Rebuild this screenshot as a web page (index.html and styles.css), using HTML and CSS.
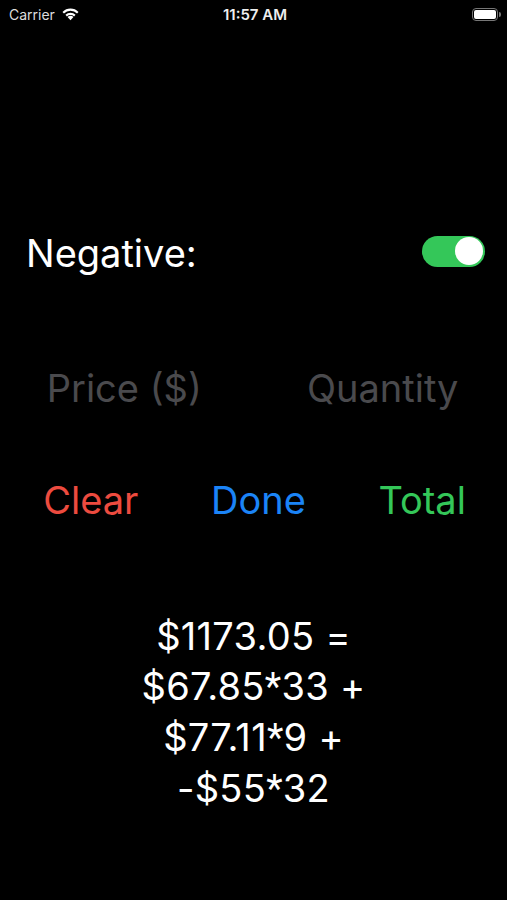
FILE: index.html
```html
<!DOCTYPE html>
<html lang="en">
<head>
  <meta charset="UTF-8" />
  <meta name="viewport" content="width=device-width, initial-scale=1.0"/>
  <title>Price Calculator</title>
  <link rel="stylesheet" href="styles.css">
</head>
<body>
  <div class="status-bar">
    <div class="carrier">
      Carrier
      <svg class="wifi" width="19" height="14" viewBox="0 0 18 13">
        <path d="M9 12.5 L6.2 9.4 A4.2 4.2 0 0 1 11.8 9.4 Z" fill="#fff"/>
        <path d="M4.2 7.3 A6.9 6.9 0 0 1 13.8 7.3 L12.4 8.8 A4.9 4.9 0 0 0 5.6 8.8 Z" fill="#fff"/>
        <path d="M1.4 4.5 A10.7 10.7 0 0 1 16.6 4.5 L15.2 6 A8.7 8.7 0 0 0 2.8 6 Z" fill="#fff"/>
      </svg>
    </div>
    <div class="time">11:57 AM</div>
    <div class="battery">
      <span class="battery-body"><span class="battery-level"></span></span>
      <span class="battery-nub"></span>
    </div>
  </div>

  <div class="toggle-row">
    <span class="label">Negative:</span>
    <span class="switch on"><span class="knob"></span></span>
  </div>

  <div class="fields">
    <input type="text" class="field" placeholder="Price ($)">
    <input type="text" class="field" placeholder="Quantity">
  </div>

  <div class="buttons">
    <button class="btn clear">Clear</button>
    <button class="btn done">Done</button>
    <button class="btn total">Total</button>
  </div>

  <div class="result">
    $1173.05 =<br>
    $67.85<span class="op">*</span>33 +<br>
    $77.11<span class="op">*</span>9 +<br>
    -$55<span class="op">*</span>32
  </div>
</body>
</html>
```

FILE: styles.css
```css
body {
  font-family: Inter, "Noto Sans", sans-serif;
  margin: 0;
  padding: 0;
  background-color: #000;
  color: #fff;
  width: 507px;
}

.status-bar {
  display: flex;
  justify-content: space-between;
  align-items: center;
  height: 28px;
  padding: 0 6px 0 9px;
  font-size: 14px;
}

.carrier {
  flex: 1;
  display: flex;
  align-items: center;
  gap: 6px;
  color: #ddd;
}

.time {
  font-weight: 600;
  font-size: 15px;
  color: #eee;
}

.battery {
  flex: 1;
  display: flex;
  justify-content: flex-end;
  align-items: center;
}

.battery-body {
  display: flex;
  width: 26px;
  height: 13px;
  box-sizing: border-box;
  border: 1px solid #777;
  border-radius: 4px;
  padding: 1px;
}

.battery-level {
  flex: 1;
  background-color: #fff;
  border-radius: 2px;
}

.battery-nub {
  width: 2px;
  height: 5px;
  margin-left: 1px;
  background-color: #777;
  border-radius: 0 2px 2px 0;
}

.toggle-row {
  display: flex;
  justify-content: space-between;
  align-items: center;
  margin-top: 201px;
  padding: 0 22px 0 26px;
  height: 44px;
}

.label {
  font-size: 38px;
  padding-top: 4px;
}

.switch {
  display: flex;
  align-items: center;
  justify-content: flex-end;
  width: 63px;
  height: 31px;
  box-sizing: border-box;
  padding: 2px;
  border-radius: 16px;
  background-color: #34c759;
}

.switch .knob {
  width: 28px;
  height: 28px;
  border-radius: 50%;
  background-color: #fff;
}

.fields {
  display: grid;
  grid-template-columns: 1fr 1fr;
  gap: 10px;
  margin-top: 90px;
}

.field {
  background: none;
  border: none;
  outline: none;
  color: #fff;
  font-family: inherit;
  font-size: 38px;
  text-align: center;
  width: 100%;
  padding: 0;
  height: 50px;
}

.field::placeholder {
  color: #4a4a4d;
}

.buttons {
  display: grid;
  grid-template-columns: 1fr 1fr 1fr;
  margin-top: 62px;
  padding: 0 2px 0 8px;
}

.btn {
  background: none;
  border: none;
  font-family: inherit;
  font-size: 38px;
  padding: 0;
  height: 50px;
}

.btn.clear { color: #ed4b3f; }
.btn.done { color: #1b84f7; margin-left: 4px; }
.btn.total { color: #34c759; }

.result {
  margin-top: 86px;
  text-align: center;
  font-size: 38px;
  line-height: 50px;
  letter-spacing: 0.3px;
}

.result .op {
  font-family: Roboto, sans-serif;
}
```
